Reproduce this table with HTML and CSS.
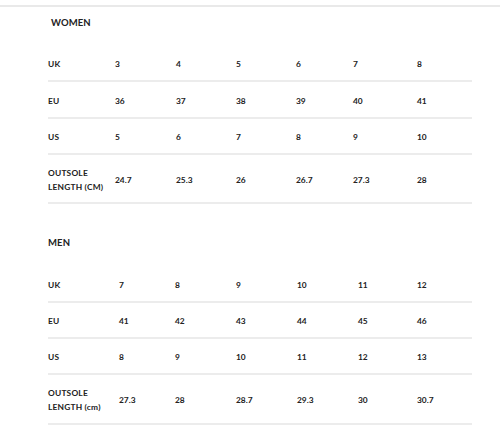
FILE: index.html
```html
<!DOCTYPE html>
<html>
<head>
<meta charset="utf-8">
<link rel="stylesheet" href="styles.css">
</head>
<body>
<div class="topline"></div>
<section class="chart women">
  <h2 class="title title-women">WOMEN</h2>
  <div class="row r1"><span class="label">UK</span><span>3</span><span>4</span><span>5</span><span>6</span><span>7</span><span>8</span></div>
  <div class="row r2"><span class="label">EU</span><span>36</span><span>37</span><span>38</span><span>39</span><span>40</span><span>41</span></div>
  <div class="row r3"><span class="label">US</span><span>5</span><span>6</span><span>7</span><span>8</span><span>9</span><span>10</span></div>
  <div class="row row-tall"><span class="label">OUTSOLE<br>LENGTH (CM)</span><span>24.7</span><span>25.3</span><span>26</span><span>26.7</span><span>27.3</span><span>28</span></div>
</section>
<section class="chart men">
  <h2 class="title title-men">MEN</h2>
  <div class="row r1"><span class="label">UK</span><span>7</span><span>8</span><span>9</span><span>10</span><span>11</span><span>12</span></div>
  <div class="row r3"><span class="label">EU</span><span>41</span><span>42</span><span>43</span><span>44</span><span>45</span><span>46</span></div>
  <div class="row r3"><span class="label">US</span><span>8</span><span>9</span><span>10</span><span>11</span><span>12</span><span>13</span></div>
  <div class="row row-tall men-tall"><span class="label">OUTSOLE<br>LENGTH (cm)</span><span>27.3</span><span>28</span><span>28.7</span><span>29.3</span><span>30</span><span>30.7</span></div>
</section>
</body>
</html>
```

FILE: styles.css
```css
html, body {
  margin: 0;
  padding: 0;
  background: #ffffff;
}
body {
  padding-top: 5px;
  font-family: Lato, "Liberation Sans", sans-serif;
  color: #222222;
  width: 500px;
  height: 448px;
  overflow: hidden;
}
.topline {
  height: 0;
  border-top: 2px solid #e9e9e9;
}
.chart {
  margin-left: 48px;
  width: 424px;
}
.title {
  margin: 0;
  font-size: 9.5px;
  font-weight: 700;
  line-height: 12px;
  letter-spacing: 0.1px;
}
.title-women {
  margin-left: 3px;
  padding-top: 10px;
  padding-bottom: 16px;
}
.title-men {
  padding-top: 33px;
  padding-bottom: 17px;
}
.row {
  display: grid;
  align-items: center;
  padding-top: 2px;
  box-sizing: border-box;
  border-bottom: 2px solid #ececec;
  font-size: 8.4px;
  font-weight: 700;
  line-height: 14px;
}
.r1, .r2 {
  height: 37px;
}
.r3 {
  height: 36px;
}
.row-tall {
  height: 49px;
}
.men-tall {
  height: 50px;
}
.women .row {
  grid-template-columns: 67px 61px 60px 60px 57px 64px 55px;
}
.men .row {
  grid-template-columns: 71px 56px 61px 61px 61px 59px 55px;
}
.label {
  letter-spacing: 0.2px;
}
```
